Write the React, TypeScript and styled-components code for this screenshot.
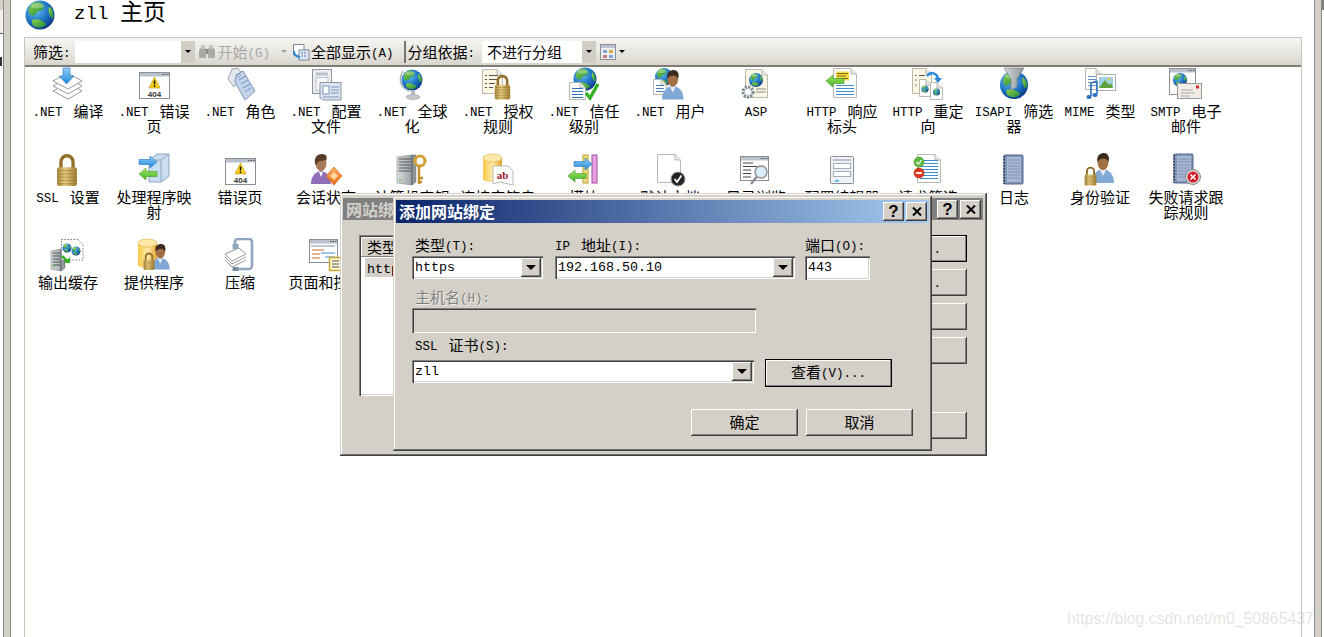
// App.tsx
import React from 'react';
import styled, { createGlobalStyle } from 'styled-components';

const GlobalStyle = createGlobalStyle`
  html, body { margin: 0; padding: 0; background: #fff; }
  body { font-family: "Noto Sans CJK SC", "Liberation Sans", sans-serif; }
`;

const FACE = '#d4d0c8';

const Page = styled.div`
  position: relative;
  display: flex;
  width: 1324px;
  height: 637px;
  overflow: hidden;
  background: #fff;
  color: #000;
  font-size: 15px;
  line-height: 15px;
`;

const LeftEdge = styled.div`
  width: 3px;
  display: flex;
  flex-direction: column;
`;

const EdgeTop = styled.div`
  height: 10px;
  background: ${FACE};
`;

const EdgeLight = styled.div`
  height: 23px;
  background: #f1f0ec;
  border-bottom: 1px solid #555;
`;

const EdgeGlyph = styled.div`
  width: 2px;
  height: 9px;
  margin-top: 23px;
  background: #333;
`;

const RightEdge = styled.div`
  width: 2px;
`;

const RightEdgeTop = styled.div`
  height: 10px;
  background: #808080;
`;

const Rail = styled.div`
  width: 8px;
  box-sizing: border-box;
  background: ${FACE};
  border-left: 1px solid #8a8a86;
  border-right: 1px solid #8a8a86;
`;

const Workspace = styled.main`
  flex: 1;
  display: flex;
  flex-direction: column;
  padding: 0 12px 0 13px;
  min-width: 0;
`;

const TitleRow = styled.header`
  height: 37px;
  display: flex;
  align-items: flex-start;
  padding-left: 1px;
`;

// half a CJK character wide; line-height 0 keeps it from stretching the line box
const Latin = styled.span`
  font-family: "Liberation Mono", monospace;
  font-size: 0.8333em;
  line-height: 0;
  word-spacing: 0.28em;
  vertical-align: 1px;
`;

const TitleText = styled.h1`
  margin: 0 0 0 19px;
  font-size: 23px;
  line-height: 20px;
  font-weight: 400;

  ${Latin} {
    word-spacing: 0;
  }
`;

const Panel = styled.section`
  flex: 1;
  display: flex;
  flex-direction: column;
  border-left: 1px solid #c8c5bd;
  border-right: 1px solid #c8c5bd;
`;

const Toolbar = styled.div`
  height: 30px;
  box-sizing: border-box;
  display: flex;
  align-items: center;
  padding-left: 8px;
  border-top: 1px solid #c8c5bd;
  border-bottom: 2px solid #7f7d76;
  background: linear-gradient(#f6f5f1, #e6e4de 60%, #d8d5cd);
`;

const ToolText = styled.span<{ $ml?: number; $off?: boolean }>`
  margin-left: ${p => p.$ml ?? 0}px;
  white-space: nowrap;
  color: ${p => (p.$off ? '#a8a8a8' : '#000')};
`;

const ToolCombo = styled.div<{ $width: number; $ml: number }>`
  width: ${p => p.$width}px;
  margin-left: ${p => p.$ml}px;
  height: 22px;
  display: flex;
  background: #fff;
`;

const ToolComboValue = styled.div`
  flex: 1;
  padding: 3px 0 0 5px;
`;

const ToolComboDrop = styled.div`
  width: 14px;
  display: flex;
  align-items: center;
  justify-content: center;
  background: #d0cdc5;
`;

const Caret = styled.i<{ $ml?: number; $color?: string }>`
  display: block;
  margin-left: ${p => p.$ml ?? 0}px;
  width: 0;
  height: 0;
  border-left: 3px solid transparent;
  border-right: 3px solid transparent;
  border-top: 3px solid ${p => p.$color ?? '#000'};
`;

const ToolSeparator = styled.div`
  width: 2px;
  height: 22px;
  margin-left: 10px;
  background: #77756f;
`;

const ToolIcon = styled.svg<{ $ml: number }>`
  display: block;
  margin-left: ${p => p.$ml}px;
  flex-shrink: 0;
`;

const FeatureGrid = styled.div`
  display: grid;
  grid-template-columns: repeat(14, 86px);
  grid-auto-rows: 85.5px;
`;

const Feature = styled.div`
  display: flex;
  flex-direction: column;
  align-items: center;
`;

const FeatureIcon = styled.svg`
  display: block;
  width: 36px;
  height: 36px;
  flex-shrink: 0;
`;

const FeatureLabel = styled.div`
  width: 80px;
  text-align: center;
  line-height: 15px;
`;

const DefsHolder = styled.svg`
  position: absolute;
  width: 0;
  height: 0;
`;

const Watermark = styled.div`
  position: absolute;
  left: 1067px;
  top: 610px;
  z-index: 3;
  font-family: "Liberation Sans", sans-serif;
  font-size: 15.8px;
  line-height: 17px;
  white-space: nowrap;
  color: rgba(150, 150, 150, 0.28);
`;

const Dialog = styled.div<{ $left: number; $top: number; $width: number; $height: number; $z: number }>`
  position: absolute;
  left: ${p => p.$left}px;
  top: ${p => p.$top}px;
  width: ${p => p.$width}px;
  height: ${p => p.$height}px;
  z-index: ${p => p.$z};
  box-sizing: border-box;
  display: flex;
  flex-direction: column;
  background: ${FACE};
  box-shadow: inset -1px -1px #404040, inset 1px 1px ${FACE}, inset -2px -2px #707070, inset 2px 2px #fff;
`;

const TitleBar = styled.div<{ $active?: boolean }>`
  height: ${p => (p.$active ? 23 : 22)}px;
  flex-shrink: 0;
  margin: ${p => (p.$active ? '4px 3px 0' : '5px 4px 0 3px')};
  display: flex;
  align-items: center;
  justify-content: space-between;
  padding: 0 2px 0 3px;
  font-size: 16px;
  font-weight: 700;
  white-space: nowrap;
  color: ${p => (p.$active ? '#fff' : FACE)};
  background: ${p => (p.$active ? 'linear-gradient(90deg, #0a246a, #a6caf0)' : '#808080')};
`;

const TitleButtons = styled.div`
  display: flex;
  gap: 2px;
`;

const CaptionButton = styled.div`
  width: 21px;
  height: 19px;
  display: flex;
  align-items: center;
  justify-content: center;
  font-family: "Liberation Sans", sans-serif;
  font-size: 17px;
  font-weight: 700;
  color: #000;
  background: ${FACE};
  box-shadow: inset -1px -1px #404040, inset 1px 1px #fff, inset -2px -2px #808080;
`;

const BackBody = styled.div`
  flex: 1;
  display: flex;
  align-items: flex-start;
  padding: 15px 20px 0 19px;
  gap: 16px;
`;

const BindingList = styled.div`
  flex: 1;
  height: 161px;
  box-sizing: border-box;
  padding: 2px;
  background: #fff;
  box-shadow: inset 1px 1px #808080, inset 2px 2px #404040, inset -1px -1px #fff, inset -2px -2px ${FACE};
`;

const ListHeader = styled.div`
  height: 20px;
  box-sizing: border-box;
  padding: 2px 0 0 6px;
  background: ${FACE};
  box-shadow: inset -1px -1px #808080, inset 1px 1px #fff;
`;

const ListRow = styled.div`
  height: 19px;
  margin: 1px 0 0 4px;
  box-sizing: border-box;
  padding: 2px 0 0 2px;
  font-size: 16px;
  background: ${FACE};
`;

const BackActions = styled.div`
  width: 127px;
  display: flex;
  flex-direction: column;
  gap: 7px;
`;

const PushButton = styled.button<{ $width?: number; $height?: number; $default?: boolean; $mt?: number }>`
  display: block;
  width: ${p => (p.$width ? `${p.$width}px` : '100%')};
  height: ${p => p.$height ?? 27}px;
  margin: ${p => p.$mt ?? 0}px 0 0;
  padding: 0 0 3px;
  border: none;
  font: inherit;
  color: #000;
  flex-shrink: 0;
  background: ${FACE};
  box-shadow: ${p =>
    p.$default
      ? 'inset 0 0 0 1px #000, inset -2px -2px #808080, inset 2px 2px #fff'
      : 'inset -1px -1px #404040, inset 1px 1px #fff, inset -2px -2px #808080'};
`;

const Form = styled.div`
  flex: 1;
  display: flex;
  flex-direction: column;
  padding: 16px 19px 0;
`;

const FieldRow = styled.div<{ $mt?: number }>`
  display: flex;
  align-items: flex-start;
  margin-top: ${p => p.$mt ?? 0}px;
`;

const Field = styled.div<{ $width: number; $ml?: number }>`
  width: ${p => p.$width}px;
  margin-left: ${p => p.$ml ?? 0}px;
  flex-shrink: 0;
`;

const FieldLabel = styled.div<{ $indent?: number; $off?: boolean; $gap?: number }>`
  height: 15px;
  line-height: 11px;
  margin-bottom: ${p => p.$gap ?? 2}px;
  padding-left: ${p => p.$indent ?? 0}px;
  white-space: nowrap;
  color: ${p => (p.$off ? '#808080' : '#000')};
  text-shadow: ${p => (p.$off ? '1px 1px #f0efea' : 'none')};
`;

const Sunken = styled.div<{ $height?: number; $disabled?: boolean }>`
  height: ${p => p.$height ?? 23}px;
  box-sizing: border-box;
  display: flex;
  align-items: stretch;
  padding: 2px;
  background: ${p => (p.$disabled ? FACE : '#fff')};
  box-shadow: inset 1px 1px #808080, inset 2px 2px #404040, inset -1px -1px #fff, inset -2px -2px ${FACE};
`;

const ValueText = styled.div`
  flex: 1;
  padding: 2px 0 0 1px;
  font-family: "Liberation Mono", monospace;
  font-size: 13.33px;
  line-height: 15px;
`;

const DropButton = styled.div`
  width: 20px;
  display: flex;
  align-items: center;
  justify-content: center;
  background: ${FACE};
  box-shadow: inset -1px -1px #404040, inset 1px 1px #fff, inset -2px -2px #808080;
`;

const DropArrow = styled.i`
  display: block;
  width: 0;
  height: 0;
  border-left: 5px solid transparent;
  border-right: 5px solid transparent;
  border-top: 5px solid #000;
`;

const Footer = styled.div`
  display: flex;
  justify-content: flex-end;
  gap: 8px;
  margin-top: 22px;
`;

const Mixed: React.FC<{ text: string }> = ({ text }) => (
  <>
    {text.split(/([\x20-\x7e]+)/).map((run, i) =>
      /[\x20-\x7e]/.test(run) ? <Latin key={i}>{run}</Latin> : run ? <span key={i}>{run}</span> : null
    )}
  </>
);

const Globe: React.FC<{ x: number; y: number; r: number }> = ({ x, y, r }) => (
  <g transform={`translate(${x} ${y}) scale(${r / 16})`}>
    <circle r="16" fill="url(#globe)" />
    <path d="M-8 -13 C-2 -16 5 -13 4 -8 C3 -4 -2 -6 -4 -2 C-6 1 -9 2 -11 -1 C-14 -4 -12 -10 -8 -13Z" fill="url(#land)" />
    <path d="M-9 6 C-4 3 3 6 7 10 C4 15 -4 15 -8 11Z" fill="url(#land)" />
    <path d="M10 -9 C14 -6 16 -1 14 4 C11 3 8 -5 10 -9Z" fill="url(#land)" />
    <ellipse cx="-3" cy="-10" rx="7" ry="3" fill="#fff" opacity=".3" />
  </g>
);

const Doc: React.FC<{ x: number; y: number; w: number; h: number; fill?: string; lines?: string; top?: number }> = ({
  x, y, w, h, fill = '#fff', lines, top = 10,
}) => {
  const rows: number[] = [];
  if (lines) for (let ly = top; ly < h - 2; ly += 3) rows.push(ly);
  return (
    <g transform={`translate(${x} ${y})`}>
      <path d={`M.5 .5H${w - 6}L${w - .5} 6V${h - .5}H.5Z`} fill={fill} stroke="#b9b9b2" />
      <path d={`M${w - 6} .5V6H${w - .5}`} fill="#e9e9e4" stroke="#b9b9b2" />
      {rows.map(ly => (
        <path key={ly} d={`M3 ${ly + .5}H${w - 3}`} stroke={lines} />
      ))}
    </g>
  );
};

const Lock: React.FC<{ x: number; y: number; s?: number }> = ({ x, y, s = 1 }) => (
  <g transform={`translate(${x} ${y}) scale(${s})`}>
    <path d="M4.5 14V8a5.5 5.5 0 0 1 11 0V14" fill="none" stroke="#8f6f2a" strokeWidth="3" />
    <rect x="1" y="13" width="18" height="17" rx="2" fill="url(#gold)" />
    {[16, 19, 22, 25, 28].map(ly => (
      <path key={ly} d={`M1 ${ly}H19`} stroke="#8f6f2a" strokeOpacity=".55" />
    ))}
  </g>
);

const Person: React.FC<{ x: number; y: number; s?: number; shirt?: string }> = ({ x, y, s = 1, shirt = '#7fa9d4' }) => (
  <g transform={`translate(${x} ${y}) scale(${s})`}>
    <path d="M0 30 C0 21 5 17 11 16 C17 17 22 21 22 30Z" fill={shirt} />
    <path d="M8 17L11 23L14 17Z" fill="#e8eef5" />
    <ellipse cx="11" cy="9" rx="5.5" ry="8" fill="#a36f45" />
    <path d="M5.5 9C4 2 9 0 12 0C16 0 18 4 16.5 9C15 5 9 4 5.5 9Z" fill="#3b2a20" />
  </g>
);

const Win: React.FC<{ x: number; y: number; w: number; h: number }> = ({ x, y, w, h }) => (
  <g transform={`translate(${x} ${y})`}>
    <rect x=".5" y=".5" width={w - 1} height={h - 1} fill="#fff" stroke="#8a8f96" />
    <rect x="1" y="1" width={w - 2} height="3.5" fill="#b8c1cc" />
    <path d={`M${w - 8} 2.5h1.5m1 0h1.5m1 0h1.5`} stroke="#555" />
  </g>
);

const BlueArrow: React.FC<{ x: number; y: number }> = ({ x, y }) => (
  <g transform={`translate(${x} ${y})`}>
    <path d="M0 3.5H11V0L18 6L11 12V8.5H0Z" fill="url(#blue)" stroke="#2a77c4" strokeWidth=".6" />
  </g>
);

const GreenArrow: React.FC<{ x: number; y: number }> = ({ x, y }) => (
  <g transform={`translate(${x} ${y})`}>
    <path d="M18 3.5H7V0L0 6L7 12V8.5H18Z" fill="url(#green)" stroke="#3f9a23" strokeWidth=".6" />
  </g>
);

const Barrel: React.FC<{ x: number; y: number; w: number; h: number }> = ({ x, y, w, h }) => (
  <g transform={`translate(${x} ${y})`}>
    <path d={`M0 4V${h - 4}C0 ${h} ${w} ${h} ${w} ${h - 4}V4Z`} fill="url(#gold2)" />
    <ellipse cx={w / 2} cy="4" rx={w / 2} ry="4" fill="#ffe9a8" stroke="#d9ac3e" strokeWidth=".6" />
  </g>
);

const Notebook: React.FC<{ x: number; y: number }> = ({ x, y }) => (
  <g transform={`translate(${x} ${y})`}>
    <rect x="3" y="1" width="19" height="29" rx="1" fill="#7f93b8" stroke="#55678a" />
    <rect x="6" y="3" width="14" height="25" fill="#a7b7d2" />
    {[6, 9, 12, 15, 18, 21, 24].map(ly => (
      <path key={ly} d={`M7 ${ly}H19`} stroke="#7f93b8" />
    ))}
    <path d="M3 2V30" stroke="#3d4a63" strokeWidth="2" strokeDasharray="1.5 1.5" />
  </g>
);

const Server: React.FC<{ x: number; y: number; w: number; h: number }> = ({ x, y, w, h }) => (
  <g transform={`translate(${x} ${y})`}>
    <path d={`M0 2L${w - 4} 0H${w}V${h - 3}L${w - 4} ${h}L0 ${h - 2}Z`} fill="url(#steel)" stroke="#6d7478" strokeWidth=".5" />
    {[4, 7, 10, 13, 16].map(ly => (
      <path key={ly} d={`M1.5 ${ly}H${w - 5}`} stroke="#4e5558" />
    ))}
    <path d={`M${w - 4} 0V${h}`} stroke="#4b5256" />
    <circle cx="3" cy={h - 5} r="1" fill="#54c23a" />
  </g>
);

const CompileIcon = () => (
  <>
    {[12, 7, 2].map(d => (
      <path key={d} d={`M3 ${12 + d}L18 ${4 + d}L32 ${12 + d}L18 ${20 + d}Z`} fill="#fff" stroke="#9a9a94" />
    ))}
    <path d="M13 1H20V9H24L16.5 17L9 9H13Z" fill="url(#blue)" stroke="#2a77c4" strokeWidth=".6" />
  </>
);

const ErrorPageIcon: React.FC<{ y?: number }> = ({ y = 5 }) => (
  <g transform={`translate(0 ${y})`}>
    <Win x={3} y={0} w={31} h={27} />
    <path d="M18.5 5L24 16H13Z" fill="#f7d117" stroke="#b8900c" strokeWidth=".6" />
    <path d="M18.5 8.5V12.5M18.5 13.5V15" stroke="#000" strokeWidth="1.4" />
    <text x="18.5" y="24.5" textAnchor="middle" fontFamily="Liberation Sans" fontSize="8" fontWeight="700" fill="#333">404</text>
  </g>
);

const RoleIcon = () => (
  <>
    <path d="M10 2L16 1L21 8L12 20L6 12Z" fill="#e4e8ee" stroke="#9aa3ad" />
    <path d="M14 8L21 4L33 24L23 33L13 15Z" fill="#c3d4ea" stroke="#7f93b8" />
    <path d="M17 13L24 9M19 17L26 13M21 21L28 17M23 25L29 21" stroke="#6f8fc2" />
    <circle cx="17" cy="8.5" r="1.4" fill="#fff" stroke="#7f93b8" />
  </>
);

const ConfigFileIcon = () => (
  <>
    <rect x="4.5" y="2.5" width="19" height="24" fill="#eceef1" stroke="#8d949b" />
    <rect x="8" y="5.5" width="12" height="3" fill="#b8c1cc" />
    <rect x="8" y="10.5" width="12" height="13" fill="#f8f8f8" stroke="#b8c1cc" />
    <path d="M12 15.5H33V33H15L12 31Z" fill="#dbe6f2" stroke="#8d949b" />
    <rect x="15" y="19" width="6" height="8" fill="#fff" stroke="#7f93b8" />
    <path d="M23 20H31M23 23H31M23 26H31M15 30H31" stroke="#7f93b8" />
  </>
);

const GlobeStandIcon = () => (
  <>
    <path d="M9 4C4 12 6 21 15 24" fill="none" stroke="#a9adb2" strokeWidth="1.4" />
    <Globe x={18} y={13} r={10.5} />
    <path d="M17 24H21V28H17Z" fill="#b7bbbf" />
    <ellipse cx="19" cy="30" rx="7" ry="2.5" fill="#c4c8cc" stroke="#8f9498" strokeWidth=".5" />
  </>
);

const AuthRuleIcon = () => (
  <>
    <Doc x={2} y={2} w={21} h={25} fill="#faf6e2" />
    <path d="M5 8.5h2M9 8.5h9M5 12.5h2M9 12.5h9M5 16.5h2M9 16.5h6M5 20.5h2M9 20.5h4" stroke="#555" />
    <Lock x={14} y={7} s={.85} />
  </>
);

const TrustIcon = () => (
  <>
    <Globe x={19} y={12} r={11.5} />
    <Doc x={3} y={15} w={17} h={18} lines="#2f6fc0" top={6} />
    <path d="M20 26L24 31L32 17" fill="none" stroke="#31b11f" strokeWidth="3.4" />
  </>
);

const UserIcon = () => (
  <>
    <Globe x={12} y={10} r={9} />
    <Doc x={1} y={12} w={14} h={16} lines="#4f7fc0" top={6} />
    <Person x={10} y={3} s={.98} />
  </>
);

const AspIcon = () => (
  <>
    <Doc x={7} y={2} w={23} h={29} fill="#faf6e2" />
    <Globe x={18} y={13} r={7} />
    <path d="M18 22H28M18 25H28" stroke="#888" />
    <circle cx="10" cy="25" r="5" fill="#e9edf2" stroke="#7f8a96" strokeWidth="3.2" strokeDasharray="2 1.3" />
    <circle cx="10" cy="25" r="2.5" fill="#fff" />
  </>
);

const ResponseHeaderIcon = () => (
  <>
    <Doc x={9} y={1} w={24} h={30} lines="#3f8fd2" top={17} />
    <rect x="12" y="4.5" width="13" height="9" fill="#f7dc4a" />
    <path d="M13 6.5H24M13 9H22M13 11.5H24" stroke="#7a6a12" />
    <GreenArrow x={2} y={8} />
  </>
);

const RedirectIcon = () => (
  <>
    <Doc x={2} y={1} w={20} h={26} fill="#faf6e2" />
    <path d="M5 8.5h1.5M5 13h1.5M5 18h1.5M9 8.5h6" stroke="#555" />
    <Doc x={9} y={12} w={13} h={18} />
    <Doc x={20} y={15} w={13} h={18} />
    <Globe x={15} y={22} r={3.6} />
    <Globe x={26.5} y={25} r={3.6} />
    <path d="M17 9C21 4 27 6 28 12" fill="none" stroke="#2a8ad8" strokeWidth="2.6" />
    <path d="M24 11H32L28 16Z" fill="#2a8ad8" />
  </>
);

const IsapiIcon = () => (
  <>
    <Globe x={18} y={18} r={14} />
    <path d="M8 1H28L21 12V20L15 23V12Z" fill="url(#steel)" stroke="#6d7478" strokeWidth=".6" />
  </>
);

const MimeIcon = () => (
  <>
    <Doc x={3} y={1} w={17} h={22} lines="#6a93c8" top={8} />
    <rect x="14.5" y="7.5" width="19" height="16" fill="#fff" stroke="#a9adb2" />
    <rect x="17" y="10" width="14" height="11" fill="#9fd2ea" />
    <path d="M17 21L23 13L27 18L29 16L31 21Z" fill="#5da13a" />
    <circle cx="27" cy="12.5" r="1.3" fill="#f0c030" />
    <path d="M9 16V29M15 14V27M9 16L15 14" fill="none" stroke="#2b6fbe" strokeWidth="1.6" />
    <ellipse cx="7" cy="30" rx="2.6" ry="2" fill="#2b6fbe" />
    <ellipse cx="13" cy="28" rx="2.6" ry="2" fill="#2b6fbe" />
  </>
);

const SmtpIcon = () => (
  <>
    <Win x={1} y={1} w={27} h={27} />
    <Globe x={12} y={13} r={7} />
    <rect x="9.5" y="16.5" width="24" height="15" fill="#f1ece6" stroke="#9a9a94" />
    <path d="M13 23H25M13 26H27M13 29H22" stroke="#aaa" />
    <rect x="28" y="18.5" width="3" height="3" fill="#d8232a" />
  </>
);

const SslIcon = () => <Lock x={6} y={0} s={1.1} />;

const HandlerIcon = () => (
  <>
    <path d="M13 7L21 1H33V23L25 29H13Z" fill="#c9dcf0" stroke="#8fa5bf" />
    <path d="M25 7V29M13 7H25L33 1" fill="none" stroke="#8fa5bf" />
    <BlueArrow x={3} y={3} />
    <GreenArrow x={3} y={15} />
  </>
);

const SessionIcon = () => (
  <>
    <g transform="translate(3 1)">
      <path d="M0 30C0 22 4 18 10 17C16 18 20 22 20 30Z" fill="#8f6fb8" />
      <path d="M8 18L10 23L12 18Z" fill="#fff" />
      <ellipse cx="10" cy="9" rx="5.5" ry="8" fill="#a77a58" />
      <path d="M4.5 11C2 3 7 0 11 0C15 0 17 3 15 6C11 7 7 6 6 10Z" fill="#5a3d28" />
    </g>
    <path d="M26 14L34 23L26 32L18 23Z" fill="url(#orange)" stroke="#c85a10" strokeWidth=".6" />
    <path d="M26 19L30 23L26 27L22 23Z" fill="#ffd9a0" />
  </>
);

const MachineKeyIcon = () => (
  <>
    <Server x={3} y={2} w={19} h={30} />
    <circle cx="26" cy="8" r="5" fill="none" stroke="#d2a135" strokeWidth="3" />
    <path d="M25 13V31M25 25H29M25 29H28" stroke="#c48e26" strokeWidth="2.4" fill="none" />
  </>
);

const ConnectionIcon = () => (
  <>
    <Barrel x={3} y={1} w={19} h={29} />
    <path d="M13 13H28L33 18V32L20 29L13 31Z" fill="#fff" stroke="#b9b9b2" />
    <text x="22.5" y="26" textAnchor="middle" fontFamily="Liberation Serif" fontSize="11" fontWeight="700" fill="#a02030">ab</text>
  </>
);

const ModuleIcon = () => (
  <>
    <rect x="17" y="2" width="5" height="28" fill="#f0dc7a" stroke="#b8a030" />
    <rect x="26" y="2" width="5" height="28" fill="#e8a0e0" stroke="#a050a0" />
    <BlueArrow x={8} y={5} />
    <GreenArrow x={2} y={17} />
  </>
);

const DefaultDocIcon = () => (
  <>
    <Doc x={5} y={1} w={24} h={29} />
    <circle cx="26" cy="26" r="7" fill="#222" stroke="#999" />
    <path d="M22.5 26L25 29L29.5 22.5" fill="none" stroke="#fff" strokeWidth="1.8" />
  </>
);

const DirBrowseIcon = () => (
  <>
    <Win x={2} y={3} w={29} h={25} />
    <path d="M5 10h10M5 13.5h14M5 17h8M5 20.5h8M5 24h8" stroke="#444" />
    <circle cx="23" cy="19" r="6" fill="#dceefa" stroke="#8a8f96" strokeWidth="1.4" />
    <path d="M18.5 24L13 31" stroke="#8a8f96" strokeWidth="2.4" />
  </>
);

const ConfigEditorIcon = () => (
  <>
    <rect x="6.5" y="3.5" width="23" height="27" rx="1" fill="#eef1f5" stroke="#8a8f96" />
    <rect x="9" y="6" width="18" height="2" fill="#b8c1cc" />
    <rect x="9.5" y="10.5" width="17" height="5" fill="#fff" stroke="#a5adb6" />
    <rect x="9.5" y="18.5" width="17" height="5" fill="#fff" stroke="#a5adb6" />
    <rect x="11" y="27" width="4" height="1.5" fill="#32b0e0" />
  </>
);

const FilterIcon = () => (
  <>
    <Doc x={7} y={1} w={24} h={29} lines="#3f8fd2" top={6} />
    <circle cx="9" cy="9" r="5" fill="#5dbb3f" stroke="#3f8f28" strokeWidth=".6" />
    <path d="M6.5 9L8.5 11L11.5 7" fill="none" stroke="#fff" strokeWidth="1.2" />
    <circle cx="9" cy="20" r="5" fill="#de3a20" stroke="#a82810" strokeWidth=".6" />
    <path d="M6 20H12" stroke="#fff" strokeWidth="1.8" />
  </>
);

const LogIcon = () => <Notebook x={5} y={1} />;

const AuthIcon = () => (
  <>
    <Person x={10} y={0} s={1} />
    <Lock x={2} y={13} s={.65} />
  </>
);

const FailedIcon = () => (
  <>
    <Notebook x={3} y={0} />
    <circle cx="25" cy="24" r="7.5" fill="#d8d8d8" stroke="#8a8a8a" />
    <circle cx="25" cy="24" r="5.5" fill="#d3202a" />
    <path d="M22.5 21.5L27.5 26.5M27.5 21.5L22.5 26.5" stroke="#fff" strokeWidth="1.6" />
  </>
);

const CacheIcon = () => (
  <>
    <Server x={1} y={11} w={14} h={22} />
    <path d="M11.5 1.5H28L33 6.5V22H11.5Z" fill="#fff" stroke="#777" strokeDasharray="1.5 1.5" />
    <Globe x={17} y={10} r={4.5} />
    <Globe x={26} y={13} r={4.5} />
    <path d="M12 18L18 24" stroke="#36b020" strokeWidth="2.6" />
    <path d="M14 25H20V19Z" fill="#36b020" />
  </>
);

const ProviderIcon = () => (
  <>
    <Barrel x={2} y={1} w={19} h={30} />
    <Person x={15} y={6} s={.85} />
    <Lock x={7} y={14} s={.6} />
  </>
);

const CompressIcon = () => (
  <>
    <path d="M3 16L17 10L24 16L10 23Z" fill="#fff" stroke="#9a9a94" />
    <path d="M3 19L10 26L24 19M3 22L10 29L24 22" fill="none" stroke="#9a9a94" />
    <path d="M13 8V4C13 1 15 1 18 1H27C30 1 30 3 30 6V27C30 31 28 31 26 31H13" fill="none" stroke="#8fa5bf" strokeWidth="2.6" />
    <rect x="10.5" y="6" width="6" height="5" fill="#8fa5bf" />
    <rect x="10.5" y="29" width="6" height="4" fill="#7a8a9e" />
  </>
);

const PagesIcon = () => (
  <>
    <Win x={1} y={1} w={29} h={24} />
    <path d="M3 8H27" stroke="#c3c8ce" strokeWidth="2" />
    <path d="M4 12H16M4 16H12M4 20H12" stroke="#d3642a" />
    <path d="M13 15H27M17 19H27" stroke="#3f8fd2" />
    <rect x="21.5" y="19.5" width="12" height="13" fill="#fff7d0" stroke="#c6a72c" strokeWidth="1.4" />
    <path d="M24 23H31M24 26H31M24 29H31" stroke="#555" />
  </>
);

const FEATURES: { label: string; icon: React.ReactNode }[] = [
  { label: '.NET 编译', icon: <CompileIcon /> },
  { label: '.NET 错误页', icon: <ErrorPageIcon /> },
  { label: '.NET 角色', icon: <RoleIcon /> },
  { label: '.NET 配置文件', icon: <ConfigFileIcon /> },
  { label: '.NET 全球化', icon: <GlobeStandIcon /> },
  { label: '.NET 授权规则', icon: <AuthRuleIcon /> },
  { label: '.NET 信任级别', icon: <TrustIcon /> },
  { label: '.NET 用户', icon: <UserIcon /> },
  { label: 'ASP', icon: <AspIcon /> },
  { label: 'HTTP 响应标头', icon: <ResponseHeaderIcon /> },
  { label: 'HTTP 重定向', icon: <RedirectIcon /> },
  { label: 'ISAPI 筛选器', icon: <IsapiIcon /> },
  { label: 'MIME 类型', icon: <MimeIcon /> },
  { label: 'SMTP 电子邮件', icon: <SmtpIcon /> },
  { label: 'SSL 设置', icon: <SslIcon /> },
  { label: '处理程序映射', icon: <HandlerIcon /> },
  { label: '错误页', icon: <ErrorPageIcon /> },
  { label: '会话状态', icon: <SessionIcon /> },
  { label: '计算机密钥', icon: <MachineKeyIcon /> },
  { label: '连接字符串', icon: <ConnectionIcon /> },
  { label: '模块', icon: <ModuleIcon /> },
  { label: '默认文档', icon: <DefaultDocIcon /> },
  { label: '目录浏览', icon: <DirBrowseIcon /> },
  { label: '配置编辑器', icon: <ConfigEditorIcon /> },
  { label: '请求筛选', icon: <FilterIcon /> },
  { label: '日志', icon: <LogIcon /> },
  { label: '身份验证', icon: <AuthIcon /> },
  { label: '失败请求跟踪规则', icon: <FailedIcon /> },
  { label: '输出缓存', icon: <CacheIcon /> },
  { label: '提供程序', icon: <ProviderIcon /> },
  { label: '压缩', icon: <CompressIcon /> },
  { label: '页面和控件', icon: <PagesIcon /> },
];

const SharedDefs = () => (
  <DefsHolder aria-hidden="true">
    <defs>
      <radialGradient id="globe" cx=".35" cy=".3" r=".8">
        <stop offset="0" stopColor="#6fc4ee" />
        <stop offset=".55" stopColor="#1c74c4" />
        <stop offset="1" stopColor="#0b2f7c" />
      </radialGradient>
      <linearGradient id="land" x1="0" y1="0" x2="1" y2="1">
        <stop offset="0" stopColor="#8fd24a" />
        <stop offset="1" stopColor="#1f8a3a" />
      </linearGradient>
      <linearGradient id="gold" x1="0" y1="0" x2="1" y2="0">
        <stop offset="0" stopColor="#a8853a" />
        <stop offset=".4" stopColor="#e9cf83" />
        <stop offset="1" stopColor="#a07c30" />
      </linearGradient>
      <linearGradient id="gold2" x1="0" y1="0" x2="1" y2="0">
        <stop offset="0" stopColor="#f7c948" />
        <stop offset=".5" stopColor="#ffe9a8" />
        <stop offset="1" stopColor="#e3a52c" />
      </linearGradient>
      <linearGradient id="blue" x1="0" y1="0" x2="0" y2="1">
        <stop offset="0" stopColor="#8fd0f8" />
        <stop offset="1" stopColor="#1f86dc" />
      </linearGradient>
      <linearGradient id="green" x1="0" y1="0" x2="0" y2="1">
        <stop offset="0" stopColor="#a5e86a" />
        <stop offset="1" stopColor="#3fb022" />
      </linearGradient>
      <linearGradient id="steel" x1="0" y1="0" x2="1" y2="0">
        <stop offset="0" stopColor="#d9dde0" />
        <stop offset="1" stopColor="#8a9196" />
      </linearGradient>
      <linearGradient id="orange" x1="0" y1="0" x2="0" y2="1">
        <stop offset="0" stopColor="#ffb060" />
        <stop offset="1" stopColor="#e8681a" />
      </linearGradient>
    </defs>
  </DefsHolder>
);

const CloseGlyph = () => (
  <svg width="10" height="9" viewBox="0 0 10 9">
    <path d="M1 .5L9 8.5M9 .5L1 8.5" stroke="#000" strokeWidth="2" />
  </svg>
);

const Caption = () => (
  <TitleButtons>
    <CaptionButton>?</CaptionButton>
    <CaptionButton>
      <CloseGlyph />
    </CaptionButton>
  </TitleButtons>
);

const Combo: React.FC<{ value: string }> = ({ value }) => (
  <Sunken>
    <ValueText>{value}</ValueText>
    <DropButton>
      <DropArrow />
    </DropButton>
  </Sunken>
);

const App: React.FC = () => (
  <Page>
    <GlobalStyle />
    <SharedDefs />
    <LeftEdge>
      <EdgeTop />
      <EdgeLight />
      <EdgeGlyph />
    </LeftEdge>
    <Rail />
    <Workspace>
      <TitleRow>
        <svg width="30" height="30" viewBox="0 0 30 30">
          <Globe x={15} y={15} r={14.5} />
        </svg>
        <TitleText>
          <Mixed text="zll 主页" />
        </TitleText>
      </TitleRow>
      <Panel>
        <Toolbar>
          <ToolText>
            <Mixed text="筛选:" />
          </ToolText>
          <ToolCombo $width={120} $ml={4}>
            <ToolComboValue />
            <ToolComboDrop>
              <Caret />
            </ToolComboDrop>
          </ToolCombo>
          <ToolIcon $ml={3} width="18" height="18" viewBox="0 0 18 18">
            <path d="M2 5H8V15H1V8ZM10 5H16L17 8V15H10Z" fill="#a9a9a6" />
            <rect x="3" y="2" width="4" height="4" fill="#c5c5c2" />
            <rect x="11" y="2" width="4" height="4" fill="#c5c5c2" />
            <rect x="8" y="6" width="2" height="5" fill="#888" />
          </ToolIcon>
          <ToolText $ml={2} $off>
            <Mixed text="开始(G)" />
          </ToolText>
          <Caret $ml={11} $color="#a0a0a0" />
          <ToolIcon $ml={5} width="18" height="18" viewBox="0 0 18 18">
            <path d="M1.5 1.5H12V12H1.5Z" fill="#fff" stroke="#7a8a9e" />
            <rect x="7" y="7" width="10" height="10" fill="#dfe8f2" stroke="#7a8a9e" />
            <path d="M9 10h2m1 0h2m-5 3h2m1 0h2" stroke="#4f6f9e" />
            <path d="M2 8C2 12 4 14 8 14" fill="none" stroke="#2a8ad8" strokeWidth="2" />
          </ToolIcon>
          <ToolText $ml={1}>
            <Mixed text="全部显示(A)" />
          </ToolText>
          <ToolSeparator />
          <ToolText $ml={2}>
            <Mixed text="分组依据:" />
          </ToolText>
          <ToolCombo $width={114} $ml={7}>
            <ToolComboValue>不进行分组</ToolComboValue>
            <ToolComboDrop>
              <Caret />
            </ToolComboDrop>
          </ToolCombo>
          <ToolIcon $ml={4} width="16" height="16" viewBox="0 0 16 16">
            <rect x=".5" y=".5" width="15" height="15" fill="#eef0f3" stroke="#8a8f96" />
            <rect x="1" y="1" width="14" height="3" fill="#b8c1cc" />
            <rect x="3" y="6" width="4" height="3" fill="#7fa9d4" />
            <rect x="9" y="6" width="4" height="3" fill="#d8a84a" />
            <rect x="3" y="11" width="4" height="3" fill="#c87878" />
            <rect x="9" y="11" width="4" height="3" fill="#7fa9d4" />
          </ToolIcon>
          <Caret $ml={3} />
        </Toolbar>
        <FeatureGrid>
          {FEATURES.map(f => (
            <Feature key={f.label}>
              <FeatureIcon viewBox="0 0 36 36">{f.icon}</FeatureIcon>
              <FeatureLabel>
                <Mixed text={f.label} />
              </FeatureLabel>
            </Feature>
          ))}
        </FeatureGrid>
      </Panel>
    </Workspace>
    <Rail />
    <RightEdge>
      <RightEdgeTop />
    </RightEdge>

    <Dialog $left={340} $top={193} $width={647} $height={263} $z={1}>
      <TitleBar>
        网站绑定
        <Caption />
      </TitleBar>
      <BackBody>
        <BindingList>
          <ListHeader>类型</ListHeader>
          <ListRow>
            <Latin>http</Latin>
          </ListRow>
        </BindingList>
        <BackActions>
          <PushButton $default>
            <Mixed text="添加(A)..." />
          </PushButton>
          <PushButton>
            <Mixed text="编辑(E)..." />
          </PushButton>
          <PushButton>
            <Mixed text="删除(R)" />
          </PushButton>
          <PushButton>
            <Mixed text="浏览(B)" />
          </PushButton>
          <PushButton $mt={41}>
            <Mixed text="关闭(C)" />
          </PushButton>
        </BackActions>
      </BackBody>
    </Dialog>

    <Dialog $left={393} $top={196} $width={539} $height={255} $z={2}>
      <TitleBar $active>
        添加网站绑定
        <Caption />
      </TitleBar>
      <Form>
        <FieldRow>
          <Field $width={131}>
            <FieldLabel $indent={3}>
              <Mixed text="类型(T):" />
            </FieldLabel>
            <Combo value="https" />
          </Field>
          <Field $width={240} $ml={12}>
            <FieldLabel>
              <Mixed text="IP 地址(I):" />
            </FieldLabel>
            <Combo value="192.168.50.10" />
          </Field>
          <Field $width={65} $ml={10}>
            <FieldLabel>
              <Mixed text="端口(O):" />
            </FieldLabel>
            <Sunken $height={24}>
              <ValueText>443</ValueText>
            </Sunken>
          </Field>
        </FieldRow>
        <FieldRow $mt={11}>
          <Field $width={344}>
            <FieldLabel $indent={3} $off>
              <Mixed text="主机名(H):" />
            </FieldLabel>
            <Sunken $height={25} $disabled />
          </Field>
        </FieldRow>
        <FieldRow $mt={6}>
          <Field $width={342}>
            <FieldLabel $indent={3} $gap={6}>
              <Mixed text="SSL 证书(S):" />
            </FieldLabel>
            <Combo value="zll" />
          </Field>
          <Field $width={127} $ml={11}>
            <PushButton $default $height={28} $mt={20}>
              <Mixed text="查看(V)..." />
            </PushButton>
          </Field>
        </FieldRow>
        <Footer>
          <PushButton $width={107}>确定</PushButton>
          <PushButton $width={107}>取消</PushButton>
        </Footer>
      </Form>
    </Dialog>

    <Watermark>https://blog.csdn.net/m0_50865437</Watermark>
  </Page>
);

export default App;
